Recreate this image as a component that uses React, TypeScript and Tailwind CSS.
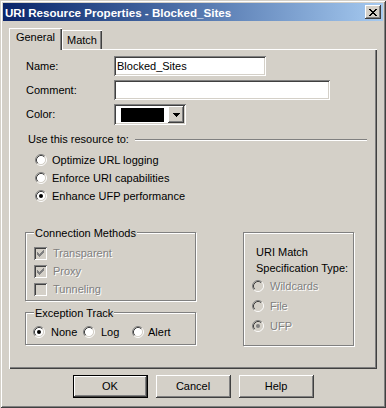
import React from "react";

const sunken =
  "shadow-[inset_1px_1px_0_#808080,inset_-1px_-1px_0_#ffffff,inset_2px_2px_0_#404040,inset_-2px_-2px_0_#d4d0c8]";
const raised =
  "shadow-[inset_-1px_-1px_0_#404040,inset_1px_1px_0_#ffffff,inset_-2px_-2px_0_#808080,inset_2px_2px_0_#d4d0c8]";
const etched =
  "border border-[#808080] shadow-[1px_1px_0_#ffffff,inset_1px_1px_0_#ffffff]";
const disabledText = "text-[#808080] [text-shadow:1px_1px_0_#ffffff]";

function Radio({ checked, disabled }: { checked?: boolean; disabled?: boolean }) {
  return (
    <svg width="12" height="12" viewBox="0 0 12 12" className="block shrink-0">
      <circle cx="6" cy="6" r="4.5" fill={disabled ? "#d4d0c8" : "#ffffff"} />
      <path d="M2.11 9.89 A5.5 5.5 0 0 1 9.89 2.11" fill="none" stroke="#808080" strokeWidth="1" />
      <path d="M9.89 2.11 A5.5 5.5 0 0 1 2.11 9.89" fill="none" stroke="#ffffff" strokeWidth="1" />
      <path d="M2.82 9.18 A4.5 4.5 0 0 1 9.18 2.82" fill="none" stroke="#404040" strokeWidth="1" />
      <path d="M9.18 2.82 A4.5 4.5 0 0 1 2.82 9.18" fill="none" stroke="#d4d0c8" strokeWidth="1" />
      {checked && <circle cx="6" cy="6" r="2" fill={disabled ? "#808080" : "#000000"} />}
    </svg>
  );
}

function Check({ checked }: { checked?: boolean }) {
  const cols = [2, 3, 4, 3, 2, 1, 0];
  return (
    <div className={`w-[13px] h-[13px] shrink-0 bg-[#d4d0c8] ${sunken}`}>
      {checked && (
        <svg width="13" height="13" viewBox="0 0 13 13" className="block" shapeRendering="crispEdges">
          {cols.map((y, x) => (
            <rect key={x} x={3 + x} y={3 + y} width="1" height="3" fill="#808080" />
          ))}
        </svg>
      )}
    </div>
  );
}

function CloseGlyph() {
  const rows = ["XX....XX", ".XX..XX.", "..XXXX..", "...XX...", "..XXXX..", ".XX..XX.", "XX....XX"];
  return (
    <svg width="8" height="7" viewBox="0 0 8 7" className="block" shapeRendering="crispEdges">
      {rows.flatMap((r, y) =>
        r.split("").map((c, x) => (c === "X" ? <rect key={`${x}-${y}`} x={x} y={y} width="1" height="1" fill="#000" /> : null))
      )}
    </svg>
  );
}

function Arrow() {
  return (
    <svg width="7" height="4" viewBox="0 0 7 4" className="block" shapeRendering="crispEdges">
      <rect x="0" y="0" width="7" height="1" fill="#000" />
      <rect x="1" y="1" width="5" height="1" fill="#000" />
      <rect x="2" y="2" width="3" height="1" fill="#000" />
      <rect x="3" y="3" width="1" height="1" fill="#000" />
    </svg>
  );
}

export default function App() {
  return (
    <div
      className={`w-[386px] h-[408px] bg-[#d4d0c8] p-[3px] flex flex-col font-['Liberation_Sans',Arial,sans-serif] text-[11px] leading-[13px] text-black shadow-[inset_1px_1px_0_#d4d0c8,inset_-1px_-1px_0_#404040,inset_2px_2px_0_#ffffff,inset_-2px_-2px_0_#808080]`}
    >
      {/* Title bar */}
      <div className="h-[18px] bg-linear-to-r from-[#0a246a] to-[#a6caf0] flex items-center pl-[2px] pr-[2px]">
        <span className="font-bold text-white text-[11.6px] whitespace-nowrap">URI Resource Properties - Blocked_Sites</span>
        <div className={`ml-auto w-[16px] h-[14px] bg-[#d4d0c8] flex items-center justify-center ${raised}`}>
          <CloseGlyph />
        </div>
      </div>

      <div className="pl-[6px] pt-[7px]">
        {/* Tabs */}
        <div className="flex items-start h-[21px]">
          <div className="relative z-10 w-[53px] h-[22px] bg-[#d4d0c8] flex justify-center pt-[3px] shadow-[inset_1px_1px_0_#ffffff,inset_-1px_0_0_#404040,inset_-2px_0_0_#808080]">
            General
          </div>
          <div className="mt-[2px] w-[40px] h-[19px] flex justify-center pt-[4px] shadow-[inset_1px_1px_0_#ffffff,inset_-1px_0_0_#404040,inset_-2px_0_0_#808080]">
            Match
          </div>
        </div>

        {/* Panel */}
        <div className="relative w-[368px] h-[320px] pt-[7px] shadow-[inset_1px_1px_0_#ffffff,inset_-1px_-1px_0_#404040,inset_-2px_-2px_0_#808080]">
          <div className="pl-[17px] flex flex-col gap-[4px]">
            <div className="flex items-center h-[20px]">
              <span className="w-[88px]">Name:</span>
              <div className={`w-[152px] h-[20px] bg-white flex items-center pl-[3px] ${sunken}`}>Blocked_Sites</div>
            </div>
            <div className="flex items-center h-[20px]">
              <span className="w-[88px]">Comment:</span>
              <div className={`w-[216px] h-[20px] bg-white ${sunken}`} />
            </div>
            <div className="flex items-center h-[21px]">
              <span className="w-[88px]">Color:</span>
              <div className={`w-[72px] h-[21px] bg-white p-[2px] flex ${sunken}`}>
                <div className="flex-1 pl-[5px] pr-[4px] pt-[2px] pb-[1px]">
                  <div className="w-full h-full bg-black" />
                </div>
                <div className={`w-[16px] h-[17px] bg-[#d4d0c8] flex items-center justify-center ${raised}`}>
                  <Arrow />
                </div>
              </div>
            </div>
          </div>

          {/* Use this resource to */}
          <div className="mt-[8px] h-[13px] flex items-center pl-[19px] pr-[10px]">
            <span className="whitespace-nowrap">Use this resource to:</span>
            <div className="ml-[6px] flex-1 h-px bg-[#808080] shadow-[0_1px_0_#ffffff]" />
          </div>

          <div className="mt-[5px] pl-[26px] flex flex-col">
            <div className="h-[18px] flex items-center">
              <Radio />
              <span className="ml-[5px]">Optimize URL logging</span>
            </div>
            <div className="h-[18px] flex items-center">
              <Radio />
              <span className="ml-[5px]">Enforce URI capabilities</span>
            </div>
            <div className="h-[18px] flex items-center">
              <Radio checked />
              <span className="ml-[5px]">Enhance UFP performance</span>
            </div>
          </div>

          {/* Bottom groups */}
          <div className="mt-[27px] pl-[16px] flex items-start">
            <div className="w-[171px] flex flex-col">
              <div className={`relative h-[69px] pt-[11px] pl-[8px] ${etched}`}>
                <span className="absolute -top-[6px] left-[8px] px-[1px] bg-[#d4d0c8]">Connection Methods</span>
                <div className="h-[18px] flex items-center">
                  <Check checked />
                  <span className={`ml-[6px] ${disabledText}`}>Transparent</span>
                </div>
                <div className="h-[18px] flex items-center">
                  <Check checked />
                  <span className={`ml-[6px] ${disabledText}`}>Proxy</span>
                </div>
                <div className="h-[18px] flex items-center">
                  <Check />
                  <span className={`ml-[6px] ${disabledText}`}>Tunneling</span>
                </div>
              </div>
              <div className={`relative mt-[11px] h-[33px] pt-[12px] pl-[7px] ${etched}`}>
                <span className="absolute -top-[6px] left-[8px] px-[1px] bg-[#d4d0c8]">Exception Track</span>
                <div className="h-[14px] flex items-center">
                  <div className="w-[50px] flex items-center">
                    <Radio checked />
                    <span className="ml-[6px]">None</span>
                  </div>
                  <div className="w-[49px] flex items-center">
                    <Radio />
                    <span className="ml-[6px]">Log</span>
                  </div>
                  <div className="flex items-center">
                    <Radio />
                    <span className="ml-[4px]">Alert</span>
                  </div>
                </div>
              </div>
            </div>

            <div className={`ml-[47px] w-[111px] h-[114px] pt-[11px] ${etched}`}>
              <div className="pl-[12px] leading-[16px]">
                <div>URI Match</div>
                <div>Specification Type:</div>
              </div>
              <div className="pl-[8px] flex flex-col">
                <div className="h-[20px] flex items-center">
                  <Radio disabled />
                  <span className={`ml-[6px] ${disabledText}`}>Wildcards</span>
                </div>
                <div className="h-[20px] flex items-center">
                  <Radio disabled />
                  <span className={`ml-[6px] ${disabledText}`}>File</span>
                </div>
                <div className="h-[20px] flex items-center">
                  <Radio checked disabled />
                  <span className={`ml-[6px] ${disabledText}`}>UFP</span>
                </div>
              </div>
            </div>
          </div>
        </div>
      </div>

      {/* Buttons */}
      <div className="mt-[6px] flex justify-center gap-[8px]">
        <div className={`w-[75px] h-[23px] border border-black flex items-center justify-center ${raised}`}>OK</div>
        <div className={`w-[75px] h-[23px] flex items-center justify-center ${raised}`}>Cancel</div>
        <div className={`w-[75px] h-[23px] flex items-center justify-center ${raised}`}>Help</div>
      </div>
    </div>
  );
}
